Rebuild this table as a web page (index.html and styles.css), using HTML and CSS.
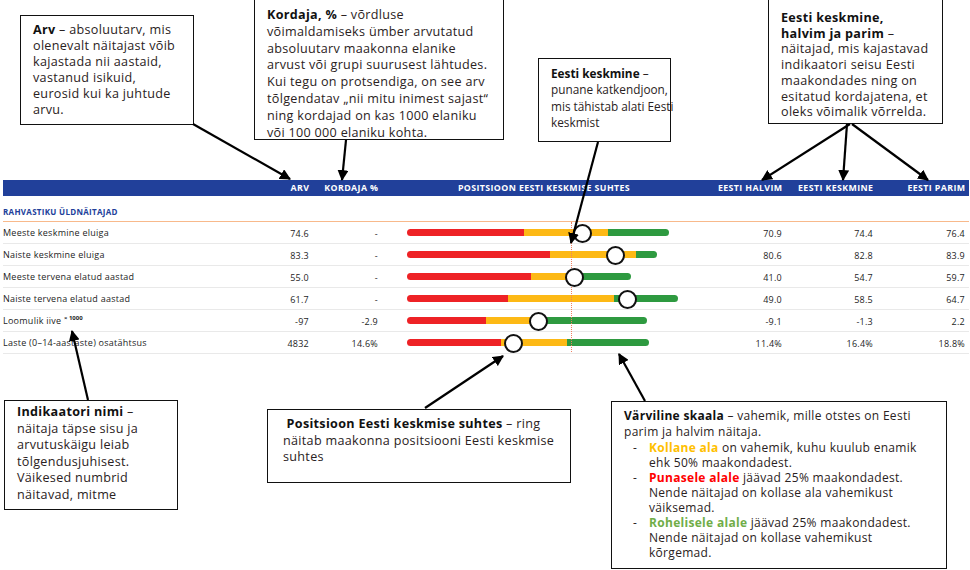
FILE: index.html
```html
<!DOCTYPE html>
<html lang="et">
<head>
<meta charset="utf-8">
<title>Näitajate tabel</title>
<link rel="stylesheet" href="styles.css">
</head>
<body>
<div class="page">
  <section class="table">
    <div class="thead">
      <div class="c-name"></div>
      <div class="c-num">ARV</div>
      <div class="c-num">KORDAJA %</div>
      <div class="c-bar">POSITSIOON EESTI KESKMISE SUHTES</div>
      <div class="c-num">EESTI HALVIM</div>
      <div class="c-num">EESTI KESKMINE</div>
      <div class="c-num">EESTI PARIM</div>
    </div>
    <div class="group">RAHVASTIKU ÜLDNÄITAJAD</div>
    <div class="rows">
      <div class="row">
        <div class="c-name">Meeste keskmine eluiga</div>
        <div class="c-num">74.6</div>
        <div class="c-num">-</div>
        <div class="c-bar"><div class="track"><div class="bar"><span class="seg red" style="width:117px"></span><span class="seg yellow" style="width:84px"></span><span class="seg green" style="width:61px"></span></div><span class="dot" style="left:175px"></span></div></div>
        <div class="c-num">70.9</div>
        <div class="c-num">74.4</div>
        <div class="c-num">76.4</div>
      </div>
      <div class="row">
        <div class="c-name">Naiste keskmine eluiga</div>
        <div class="c-num">83.3</div>
        <div class="c-num">-</div>
        <div class="c-bar"><div class="track"><div class="bar"><span class="seg red" style="width:143px"></span><span class="seg yellow" style="width:86px"></span><span class="seg green" style="width:21px"></span></div><span class="dot" style="left:208px"></span></div></div>
        <div class="c-num">80.6</div>
        <div class="c-num">82.8</div>
        <div class="c-num">83.9</div>
      </div>
      <div class="row">
        <div class="c-name">Meeste tervena elatud aastad</div>
        <div class="c-num">55.0</div>
        <div class="c-num">-</div>
        <div class="c-bar"><div class="track"><div class="bar"><span class="seg red" style="width:124px"></span><span class="seg yellow" style="width:51px"></span><span class="seg green" style="width:49px"></span></div><span class="dot" style="left:167px"></span></div></div>
        <div class="c-num">41.0</div>
        <div class="c-num">54.7</div>
        <div class="c-num">59.7</div>
      </div>
      <div class="row">
        <div class="c-name">Naiste tervena elatud aastad</div>
        <div class="c-num">61.7</div>
        <div class="c-num">-</div>
        <div class="c-bar"><div class="track"><div class="bar"><span class="seg red" style="width:101px"></span><span class="seg yellow" style="width:106px"></span><span class="seg green" style="width:64px"></span></div><span class="dot" style="left:220px"></span></div></div>
        <div class="c-num">49.0</div>
        <div class="c-num">58.5</div>
        <div class="c-num">64.7</div>
      </div>
      <div class="row">
        <div class="c-name">Loomulik iive <sup class="unit">× 1000</sup></div>
        <div class="c-num">-97</div>
        <div class="c-num">-2.9</div>
        <div class="c-bar"><div class="track"><div class="bar"><span class="seg red" style="width:79px"></span><span class="seg yellow" style="width:57px"></span><span class="seg green" style="width:104px"></span></div><span class="dot" style="left:131px"></span></div></div>
        <div class="c-num">-9.1</div>
        <div class="c-num">-1.3</div>
        <div class="c-num">2.2</div>
      </div>
      <div class="row">
        <div class="c-name">Laste (0–14-aastaste) osatähtsus</div>
        <div class="c-num">4832</div>
        <div class="c-num">14.6%</div>
        <div class="c-bar"><div class="track"><div class="bar"><span class="seg red" style="width:94px"></span><span class="seg yellow" style="width:66px"></span><span class="seg green" style="width:82px"></span></div><span class="dot" style="left:106px"></span></div></div>
        <div class="c-num">11.4%</div>
        <div class="c-num">16.4%</div>
        <div class="c-num">18.8%</div>
      </div>
      <div class="avg-line"></div>
    </div>
  </section>

  <div class="note note-arv"><b>Arv</b> – absoluutarv, mis<br>olenevalt näitajast võib<br>kajastada nii aastaid,<br>vastanud isikuid,<br>eurosid kui ka juhtude<br>arvu.</div>
  <div class="note note-kordaja"><b>Kordaja, %</b> – võrdluse<br>võimaldamiseks ümber arvutatud<br>absoluutarv maakonna elanike<br>arvust või grupi suurusest lähtudes.<br>Kui tegu on protsendiga, on see arv<br>tõlgendatav „nii mitu inimest sajast“<br>ning kordajad on kas 1000 elaniku<br>või 100 000 elaniku kohta.</div>
  <div class="note note-kesk"><b>Eesti keskmine</b> –<br>punane katkendjoon,<br>mis tähistab alati Eesti<br>keskmist</div>
  <div class="note note-eesti"><b>Eesti keskmine,<br>halvim ja parim</b> –<br>näitajad, mis kajastavad<br>indikaatori seisu Eesti<br>maakondades ning on<br>esitatud kordajatena, et<br>oleks võimalik võrrelda.</div>
  <div class="note note-nimi"><b>Indikaatori nimi</b> –<br>näitaja täpse sisu ja<br>arvutuskäigu leiab<br>tõlgendusjuhisest.<br>Väikesed numbrid<br>näitavad, mitme</div>
  <div class="note note-pos">&nbsp;<b>Positsioon Eesti keskmise suhtes</b> – ring<br>näitab maakonna positsiooni Eesti keskmise<br>suhtes</div>
  <div class="note note-skaala">
    <p><b>Värviline skaala</b> – vahemik, mille otstes on Eesti<br>parim ja halvim näitaja.</p>
    <ul>
      <li><b class="t-yellow">Kollane ala</b> on vahemik, kuhu kuulub enamik<br>ehk 50% maakondadest.</li>
      <li><b class="t-red">Punasele alale</b> jäävad 25% maakondadest.<br>Nende näitajad on kollase ala vahemikust<br>väiksemad.</li>
      <li><b class="t-green">Rohelisele alale</b> jäävad 25% maakondadest.<br>Nende näitajad on kollase vahemikust<br>kõrgemad.</li>
    </ul>
  </div>

  <svg class="arrows" width="970" height="570" viewBox="0 0 970 570">
    <defs>
      <marker id="ah" viewBox="0 0 10 10" refX="9" refY="5" markerWidth="5" markerHeight="5" orient="auto" markerUnits="strokeWidth">
        <path d="M0 0 L10 5 L0 10 z" fill="#000"/>
      </marker>
    </defs>
    <g stroke="#000" stroke-width="2.2" fill="none" marker-end="url(#ah)">
      <line x1="193" y1="124" x2="290" y2="179"/>
      <line x1="346" y1="140" x2="342" y2="180"/>
      <line x1="598" y1="142" x2="571" y2="243"/>
      <line x1="850" y1="124" x2="762" y2="180"/>
      <line x1="847" y1="124" x2="843" y2="180"/>
      <line x1="852" y1="124" x2="928" y2="180"/>
      <line x1="88" y1="400" x2="72" y2="331"/>
      <line x1="425" y1="408" x2="503" y2="356"/>
      <line x1="645" y1="401" x2="619" y2="354"/>
    </g>
  </svg>
</div>
</body>
</html>
```
FILE: styles.css
```css
* { box-sizing: border-box; }
html, body { margin: 0; padding: 0; background: #fff; }
body { font-family: "Open Sans", "Noto Sans", sans-serif; color: #222; }

.page {
  position: relative;
  width: 970px;
  height: 570px;
  overflow: hidden;
}

/* ---------- table ---------- */
.table {
  padding: 180px 1px 0 3px;
}
.thead, .row {
  display: grid;
  grid-template-columns: 247px 59px 69px 322px 82px 91px 92px;
  align-items: center;
}
.thead {
  height: 16px;
  background: #21409a;
  color: #fff;
  font-size: 8.8px;
  font-weight: 700;
  letter-spacing: 0.4px;
}
.thead .c-num { margin-right: -0.4px; }
.thead .c-bar { text-align: center; padding-left: 10px; display: flex; align-items: center; justify-content: center; }
.c-num { text-align: right; white-space: nowrap; }
.c-name { white-space: nowrap; }

.group {
  height: 26px;
  padding-top: 10px;
  font-size: 8px;
  font-weight: 700;
  letter-spacing: 0.3px;
  color: #21409a;
  border-bottom: 1.5px solid #f8b98b;
}
.rows { position: relative; }
.row {
  height: 22px;
  font-size: 9px;
  letter-spacing: 0.25px;
  color: #1d1d1d;
  border-bottom: 1px solid #e9e9e9;
}
.row:last-of-type { border-bottom: none; }
.row .c-num { padding-top: 1px; }
.unit { font-size: 6px; font-weight: 700; vertical-align: 4px; letter-spacing: 0; }

.c-bar { position: relative; height: 100%; }
.track {
  position: absolute;
  left: 29px;
  top: 0;
  height: 100%;
  display: flex;
  align-items: center;
}
.bar {
  display: flex;
  height: 7px;
  border-radius: 4px;
  overflow: hidden;
}
.seg { display: block; height: 100%; }
.red { background: #ee2226; }
.yellow { background: #fdb915; }
.green { background: #2e9a40; }
.dot {
  position: absolute;
  top: 50%;
  width: 19px;
  height: 19px;
  margin: -9px 0 0 -9px;
  border: 2.5px solid #111;
  border-radius: 50%;
  background: #fff;
  z-index: 2;
}
.avg-line {
  position: absolute;
  left: 568px;
  top: 0;
  height: 130px;
  border-left: 1px dotted #f08060;
  z-index: 1;
}

/* ---------- callout notes ---------- */
.note {
  position: absolute;
  background: #fff;
  border: 1.3px solid #111;
  font-size: 12.6px;
  letter-spacing: 0.3px;
  line-height: 16.5px;
  color: #2a2222;
  white-space: nowrap;
  z-index: 3;
}
.note b { color: #111; font-weight: 700; }
.note-arv { left: 20px; top: 15px; width: 174px; height: 110px; padding: 6px 4px 0 12px; line-height: 16px; }
.note-kordaja { left: 254px; top: -1px; width: 250px; height: 141px; padding: 7px 4px 0 12px; line-height: 16.8px; }
.note-kesk { left: 538px; top: 58px; width: 133px; height: 84px; padding: 6px 2px 0 12px; line-height: 16.3px; font-size: 11.8px; letter-spacing: 0; }
.note-eesti { left: 768px; top: -1px; width: 175px; height: 125px; padding: 10px 4px 0 12px; line-height: 15.7px; }
.note-nimi { left: 4px; top: 400px; width: 174px; height: 110px; padding: 3px 4px 0 12px; line-height: 16.6px; }
.note-pos { left: 267px; top: 409px; width: 304px; height: 74px; padding: 6px 4px 0 15px; }
.note-skaala { left: 611px; top: 401px; width: 336px; height: 168px; padding: 6px 4px 0 12px; font-size: 12px; }
.note-skaala p { margin: 0; line-height: 16px; }
.note-skaala ul { margin: 0; padding: 0 0 0 25px; list-style: none; line-height: 15px; }
.note-skaala li { position: relative; }
.note-skaala li::before { content: "-"; position: absolute; left: -16px; }
.t-yellow { color: #ffc000 !important; }
.t-red { color: #ff0000 !important; }
.t-green { color: #70ad47 !important; }

/* ---------- arrows ---------- */
.arrows {
  position: absolute;
  left: 0;
  top: 0;
  z-index: 4;
  pointer-events: none;
}
```
